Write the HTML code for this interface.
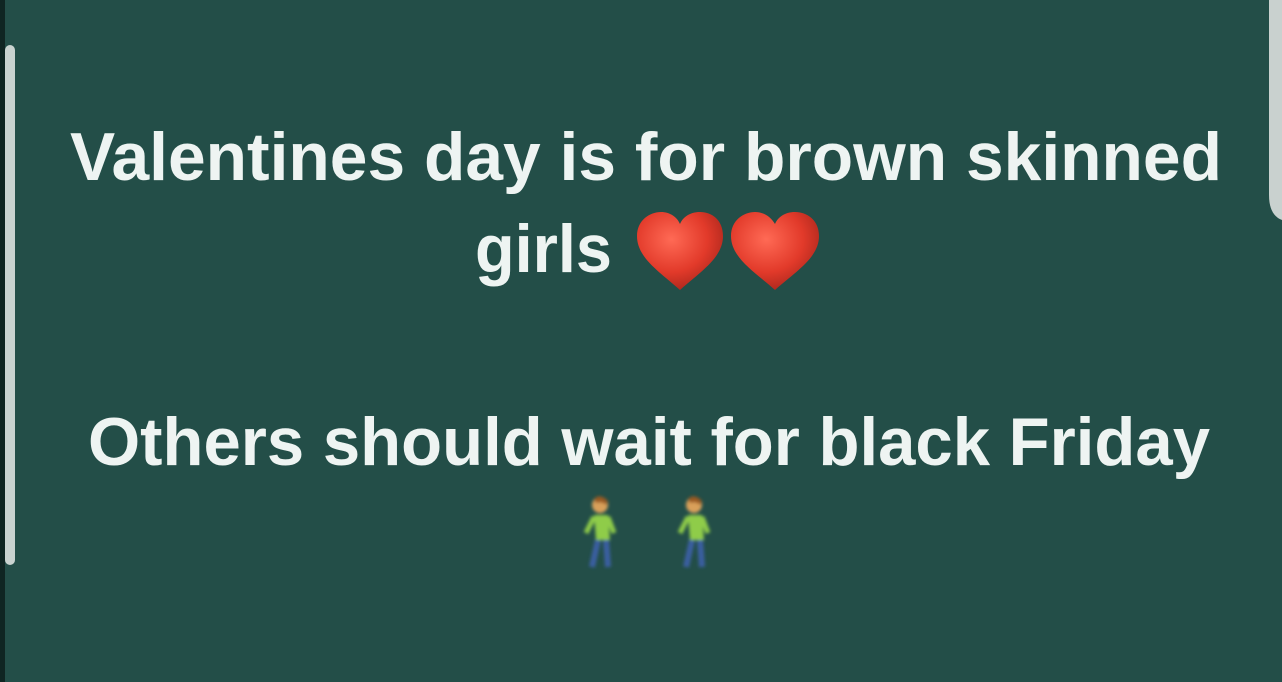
<!DOCTYPE html>
<html><head><style>
html,body{margin:0;padding:0;width:1282px;height:682px;overflow:hidden;background:#234e48}
</style></head><body>
<svg width="1282" height="682" viewBox="0 0 1282 682" xmlns="http://www.w3.org/2000/svg">
<defs>
<radialGradient id="h" cx="0.4" cy="0.35" r="0.7">
<stop offset="0" stop-color="#ff6a55"/><stop offset="0.6" stop-color="#e23a2a"/><stop offset="1" stop-color="#a8261c"/>
</radialGradient>
<filter id="b"><feGaussianBlur stdDeviation="1.5"/></filter>
</defs>
<rect width="1282" height="682" fill="#234e48"/>
<rect x="0" y="0" width="5" height="682" fill="#0f2522"/>
<rect x="5" y="45" width="10" height="520" rx="5" fill="#c9d3d0"/>
<path d="M1269 0 H1282 V220 Q1269 215 1269 195 Z" fill="#c9d1cf"/>
<g font-family="Liberation Sans, Arial, sans-serif" font-weight="bold" font-size="68" fill="#eef4f2">
<text x="70" y="180" textLength="1152" lengthAdjust="spacingAndGlyphs">Valentines day is for brown skinned</text>
<text x="475" y="272" textLength="137" lengthAdjust="spacingAndGlyphs">girls</text>
<text x="88" y="465" textLength="1122" lengthAdjust="spacingAndGlyphs">Others should wait for black Friday</text>
</g>
<g fill="url(#h)">
<path d="M680 290 C660 272 637 258 637 236 C637 220 650 212 661 212 C670 212 677 217 680 224 C683 217 690 212 700 212 C712 212 723 220 723 236 C723 258 700 272 680 290 Z"/>
<path d="M775 290 C755 272 731 258 731 236 C731 220 744 212 755 212 C764 212 771 217 775 224 C778 217 785 212 795 212 C807 212 819 220 819 236 C819 258 795 272 775 290 Z"/>
</g>
<g filter="url(#b)">
<g transform="translate(582,495)">
<circle cx="18" cy="10" r="8" fill="#d9a05a"/>
<path d="M12 4 Q18 -2 26 6 L24 10 Q20 6 14 8Z" fill="#9a5a20"/>
<path d="M12 20 L26 20 L28 45 L14 45 Z" fill="#8fcc4a"/>
<path d="M12 22 L4 38" stroke="#8fcc4a" stroke-width="5"/>
<path d="M26 22 L32 38" stroke="#8fcc4a" stroke-width="5"/>
<path d="M16 45 L10 72 M24 45 L26 72" stroke="#3a5fa0" stroke-width="6"/>
</g>
<g transform="translate(676,495)">
<circle cx="18" cy="10" r="8" fill="#d9a05a"/>
<path d="M12 4 Q18 -2 26 6 L24 10 Q20 6 14 8Z" fill="#9a5a20"/>
<path d="M12 20 L26 20 L28 45 L14 45 Z" fill="#8fcc4a"/>
<path d="M12 22 L4 38" stroke="#8fcc4a" stroke-width="5"/>
<path d="M26 22 L32 38" stroke="#8fcc4a" stroke-width="5"/>
<path d="M16 45 L10 72 M24 45 L26 72" stroke="#3a5fa0" stroke-width="6"/>
</g>
</g>
</svg>
</body></html>
